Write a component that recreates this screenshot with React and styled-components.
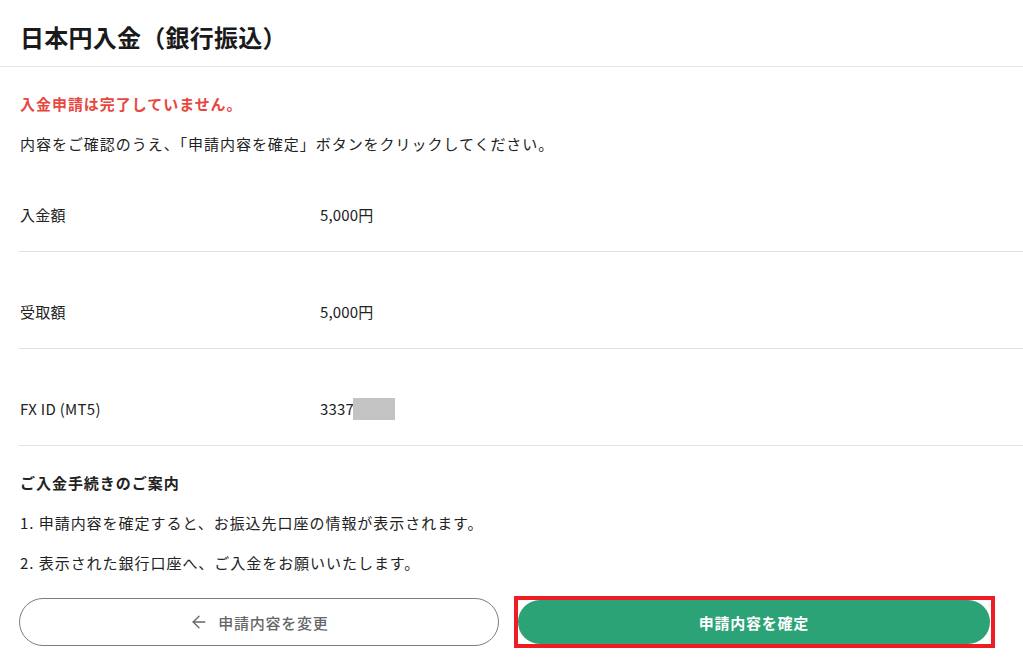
import React from 'react';
import styled, { createGlobalStyle } from 'styled-components';
import { ArrowLeft } from 'lucide-react';

const GlobalStyle = createGlobalStyle`
  html, body {
    margin: 0;
    padding: 0;
    background: #ffffff;
  }
  body {
    font-family: "Noto Sans CJK JP", "Noto Sans", sans-serif;
    color: #222222;
    letter-spacing: 0.06em;
    overflow: hidden;
  }
`;

const rows = [
  { label: '入金額', value: '5,000円' },
  { label: '受取額', value: '5,000円' },
  { label: 'FX ID (MT5)', value: '3337', masked: true },
];

const steps = [
  '1. 申請内容を確定すると、お振込先口座の情報が表示されます。',
  '2. 表示された銀行口座へ、ご入金をお願いいたします。',
];

const App = () => {
  return (
    <>
      <GlobalStyle />
      <Page>
        <Header>
          <Title>日本円入金（銀行振込）</Title>
        </Header>
        <Content>
          <Notice>入金申請は完了していません。</Notice>
          <Lead>内容をご確認のうえ、「申請内容を確定」ボタンをクリックしてください。</Lead>
          <Details>
            {rows.map((row) => (
              <Row key={row.label}>
                <Label>{row.label}</Label>
                <Value>
                  {row.value}
                  {row.masked && <Mask />}
                </Value>
              </Row>
            ))}
          </Details>
          <Guide>
            <GuideTitle>ご入金手続きのご案内</GuideTitle>
            {steps.map((s) => (
              <Step key={s}>{s}</Step>
            ))}
          </Guide>
          <Actions>
            <BackButton type="button">
              <ArrowLeft size={20} strokeWidth={1.6} />
              申請内容を変更
            </BackButton>
            <Highlight>
              <ConfirmButton type="button">申請内容を確定</ConfirmButton>
            </Highlight>
          </Actions>
        </Content>
      </Page>
    </>
  );
};

export default App;

const Page = styled.div`
  width: 1023px;
  height: 668px;
  background: #ffffff;
`;

const Header = styled.header`
  padding: 19px 20px 11px;
  border-bottom: 1px solid #e6e6e6;
`;

const Title = styled.h1`
  margin: 0;
  font-size: 24px;
  line-height: 36px;
  font-weight: 700;
  color: #1a1a1a;
  letter-spacing: 0.01em;
`;

const Content = styled.main`
  padding: 26px 0 0 19px;
`;

const Notice = styled.p`
  margin: 0 0 18px 1px;
  font-size: 15px;
  line-height: 22px;
  font-weight: 700;
  color: #e8473f;
`;

const Lead = styled.p`
  margin: 0 0 0 1px;
  font-size: 15px;
  line-height: 22px;
`;

const Details = styled.div`
  display: flex;
  flex-direction: column;
`;

const Row = styled.div`
  display: flex;
  align-items: center;
  padding: 48px 0 24px 1px;
  border-bottom: 1px solid #e3e3e3;
  font-size: 15px;
  line-height: 24px;
  letter-spacing: 0.02em;
`;

const Label = styled.div`
  width: 300px;
  flex-shrink: 0;
`;

const Value = styled.div`
  display: flex;
  align-items: center;
  letter-spacing: 0.01em;
`;

const Mask = styled.span`
  display: inline-block;
  width: 42px;
  height: 22px;
  margin-left: -1px;
  background: #c3c3c3;
`;

const Guide = styled.section`
  display: flex;
  flex-direction: column;
  gap: 16px;
  padding: 25px 0 0 1px;
`;

const GuideTitle = styled.h2`
  margin: 0;
  font-size: 15px;
  line-height: 24px;
  font-weight: 700;
`;

const Step = styled.p`
  margin: 0;
  font-size: 15px;
  line-height: 24px;
`;

const Actions = styled.div`
  display: flex;
  align-items: center;
  gap: 15px;
  margin-top: 21px;
`;

const BackButton = styled.button`
  width: 480px;
  height: 48px;
  display: flex;
  align-items: center;
  justify-content: center;
  gap: 9px;
  padding: 0;
  background: #ffffff;
  border: 1px solid #7d7d7d;
  border-radius: 24px;
  font-family: inherit;
  font-size: 15px;
  font-weight: 500;
  letter-spacing: 0.05em;
  color: #666666;
  cursor: pointer;

  svg {
    color: #666666;
  }
`;

const Highlight = styled.div`
  width: 473px;
  height: 44px;
  border: 4px solid #ee1c25;
  display: flex;
`;

const ConfirmButton = styled.button`
  width: 472px;
  height: 44px;
  padding: 0;
  background: #2ba377;
  border: none;
  border-radius: 22px;
  font-family: inherit;
  font-size: 15px;
  font-weight: 700;
  letter-spacing: 0.05em;
  color: #ffffff;
  cursor: pointer;
`;
